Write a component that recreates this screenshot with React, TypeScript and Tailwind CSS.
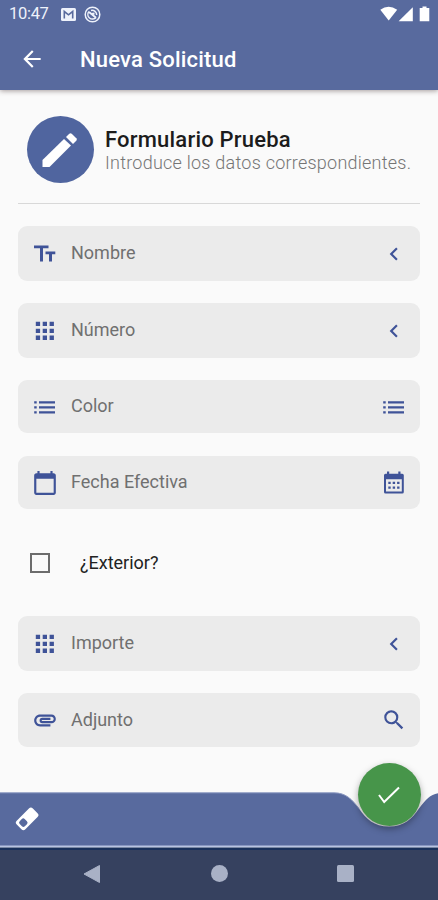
import type {ReactNode} from "react";
import {
    MdArrowBack,
    MdAttachment,
    MdCalendarToday,
    MdChevronLeft,
    MdSearch,
} from "react-icons/md";

const iconTheme = "mt-px size-[26px] shrink-0 text-[#3f5398]"

function TextSizeIcon() {
    return <svg viewBox="0 0 26 26" className={iconTheme} fill="currentColor">
        <path d="M2 4.500H16.500V7.300H11V20.500H8V7.300H2ZM13.500 10.500H23.300V13.300H20V20.500H17V13.300H13.500Z" />
    </svg>
}

function GridIcon() {
    return <svg viewBox="0 0 26 26" className={iconTheme} fill="currentColor">
        <path d="M3.800 3.800h4.300v4.300h-4.300ZM10.700 3.800h4.300v4.300h-4.300ZM17.600 3.800h4.300v4.300h-4.300ZM3.800 10.700h4.300v4.300h-4.300ZM10.700 10.700h4.300v4.300h-4.300ZM17.600 10.700h4.300v4.300h-4.300ZM3.800 17.600h4.300v4.300h-4.300ZM10.700 17.600h4.300v4.300h-4.300ZM17.600 17.600h4.300v4.300h-4.300Z" />
    </svg>
}

function ListIcon() {
    return <svg viewBox="0 0 26 26" className={iconTheme} fill="currentColor">
        <path d="M2.200 7.300H4.700V9.600H2.200ZM2.200 12.300H4.700V14.600H2.200ZM2.200 17.300H4.700V19.600H2.200ZM7 7.300H23V9.600H7ZM7 12.300H23V14.600H7ZM7 17.300H23V19.600H7Z" />
    </svg>
}

function CalendarMonthIcon() {
    return <svg viewBox="0 0 26 26" className={iconTheme} fill="currentColor">
        <path
            fillRule="evenodd"
            d="M6 1.500H8.200V3.700H17.300V1.500H19.500V3.700H21.300Q22.800 3.700 22.800 5.200V22Q22.800 23.500 21.300 23.500H4.500Q3 23.500 3 22V5.200Q3 3.700 4.500 3.700H6ZM5 9.200V21.500H20.800V9.200Z" />
        <path d="M7.300 11.700H9.700V14H7.300ZM11.700 11.700H14.100V14H11.700ZM16.100 11.700H18.500V14H16.100ZM7.300 16.500H9.700V18.800H7.300ZM11.700 16.500H14.100V18.800H11.700ZM16.100 16.500H18.500V18.800H16.100Z" />
    </svg>
}

function PencilIcon() {
    return <svg viewBox="0 0 36 36" className="size-9" fill="#fff">
        <path d="M.500 28L22 7L29 13.500L7.500 35H.500Z" />
        <path d="M24 5L27.300 1.800Q28.500 .700 29.700 1.800L34.300 6.300Q35.400 7.500 34.300 8.700L31 12Z" />
    </svg>
}

function MailIcon() {
    return <svg viewBox="0 0 15 13" className="h-[13px] w-[15px]">
        <rect width="15" height="13" rx="1.5" fill="#eef2fb" />
        <path d="M3.300 10.500V3.500L7.500 6.800L11.700 3.500V10.500" fill="none" stroke="#586a9e" strokeWidth="1.600" />
    </svg>
}

function BlockedIcon() {
    return <svg viewBox="0 0 17 17" className="size-[17px]" fill="none" stroke="#eef2fb">
        <circle cx="8.500" cy="8.500" r="7.300" strokeWidth="1.500" />
        <path d="M5 5.500A4.500 4.500 0 1 0 12 11.500M7 4.500A4.500 4.500 0 0 1 12.700 9" strokeWidth="1.500" />
        <path d="M5 6L12 11.700M7.500 8L10.500 7.500" strokeWidth="1.800" />
    </svg>
}

function SignalIcons() {
    return <svg viewBox="0 0 50 16" className="h-4 w-[50px]" fill="#fff">
        <path d="M.300 3.800Q8.500 -2.200 17.200 3.800L8.700 14.500Z" />
        <path d="M18.600 15.200L32.800 1.300V15.200Z" />
        <path d="M42.500 .500H46.500V2H49.300V15.300H39.700V2H42.500Z" />
    </svg>
}

function EraserIcon() {
    return <svg viewBox="0 0 24 24" className="size-6">
        <g transform="rotate(-45 12 12)">
            <rect x=".8" y="5.900" width="22.800" height="12.200" rx="2.800" fill="#fff" />
            <rect x="3.300" y="8.400" width="7" height="7.200" rx="2" fill="#586a9e" />
        </g>
    </svg>
}

type FieldProps = {
    label: string
    left: ReactNode
    right: ReactNode
    className: string
}

function Field({label, left, right, className}: FieldProps) {
    return <div className={"flex items-center rounded-[9px] bg-[#ebebeb] pb-px pl-3.5 pr-[13px] " + className}>
        {left}
        <span className="ml-[13px] flex-1 text-[18px] leading-6 text-[#707070]">{label}</span>
        {right}
    </div>
}

function BottomBar() {
    return <div className="relative h-[56px] shrink-0 bg-[#fafafa]">
        <svg viewBox="0 0 438 56" className="absolute inset-0 h-[56px] w-[438px]">
            <path
                d="M0 .8H334C346 .8 352 7.500 359 16.500C366 27 374 34.500 389 34.500C404 34.500 412 27 419 16.500C426 7.500 430 2.500 438 1.200V54H0Z"
                fill="#586a9e" />
            <path d="M0 .8H334C346 .8 352 7.500 359 16.500" fill="none" stroke="#8d9ac2" strokeWidth="1" />
            <rect y="53.500" width="438" height="2" fill="#b8c4e2" />
            <rect y="55.500" width="438" height=".500" fill="#18305a" />
        </svg>
        <button type="button" className="absolute left-[15px] top-[15px]">
            <EraserIcon />
        </button>
        <button
            type="button"
            className="absolute left-[358px] top-[-29px] flex size-[63px] items-center justify-center rounded-full bg-[#47954a] pr-px pt-px shadow-[0_3px_7px_rgba(0,0,0,0.35)]">
            <svg viewBox="0 0 24 24" className="size-6" fill="none" stroke="#fff" strokeWidth="2">
                <path d="M2 12L7.200 19L22 4.500" />
            </svg>
        </button>
    </div>
}

function NavigationBar() {
    return <div className="flex h-[52px] shrink-0 items-center border-t-2 border-[#18305a] bg-[#36415f] pb-[3px] pl-[83px]">
        <svg viewBox="0 0 18 20" className="h-5 w-[18px]">
            <path d="M1 10L16.500 1.500V18.500Z" fill="#a9b1c6" stroke="#a9b1c6" strokeLinejoin="round" />
        </svg>
        <div className="ml-[110px] size-[17px] rounded-full bg-[#a9b1c6]" />
        <div className="ml-[109px] size-[17px] rounded-[1.5px] bg-[#a9b1c6]" />
    </div>
}

export default function App() {
    return <div className="flex h-[900px] w-[438px] flex-col overflow-hidden bg-[#fafafa] font-['Roboto',sans-serif]">
        <header className="z-10 h-[90px] shrink-0 bg-[#586a9e] text-white shadow-[0_1px_5px_rgba(60,40,40,0.45)]">
            <div className="flex h-[28px] items-center pl-[9px] pr-2">
                <span className="w-[52px] pt-px text-[16.5px] tracking-[-0.3px] text-[#eef2fb]">10:47</span>
                <MailIcon />
                <span className="ml-2"><BlockedIcon /></span>
                <span className="ml-auto"><SignalIcons /></span>
            </div>
            <div className="flex h-[62px] items-center pl-[19px]">
                <MdArrowBack className="size-[26px]" />
                <h1 className="ml-[35px] pt-px text-[22px] font-medium leading-7 tracking-[0.2px]">Nueva Solicitud</h1>
            </div>
        </header>
        <main className="flex min-h-0 flex-1 flex-col px-[18px] pt-[26px]">
            <div className="flex h-[88px] shrink-0 border-b border-[#d8d8d8] pl-2">
                <div className="ml-[0.5px] flex size-[67px] items-center justify-center rounded-full bg-[#50659f] pr-px">
                    <PencilIcon />
                </div>
                <div className="ml-[11.5px] whitespace-nowrap pt-[11px]">
                    <h2 className="text-[22px] font-medium leading-[25px] tracking-[0.2px] text-[#1c1c1c]">Formulario Prueba</h2>
                    <p className="text-[18px] font-light leading-[21px] tracking-[0.24px] text-[#757575]">Introduce los datos correspondientes.</p>
                </div>
            </div>
            <Field
                label="Nombre"
                className="mt-[22px] h-[55px]"
                left={<TextSizeIcon />}
                right={<MdChevronLeft className={iconTheme} />} />
            <Field
                label="Número"
                className="mt-[22px] h-[55px]"
                left={<GridIcon />}
                right={<MdChevronLeft className={iconTheme} />} />
            <Field
                label="Color"
                className="mt-[22px] h-[53px]"
                left={<ListIcon />}
                right={<ListIcon />} />
            <Field
                label="Fecha Efectiva"
                className="mt-[23px] h-[53px]"
                left={<MdCalendarToday className={iconTheme} />}
                right={<CalendarMonthIcon />} />
            <label className="flex h-[107px] items-center pl-3">
                <span className="size-5 border-2 border-[#6c6c6c]" />
                <span className="ml-[30px] text-[18px] leading-6 text-[#222]">¿Exterior?</span>
            </label>
            <Field
                label="Importe"
                className="h-[55px]"
                left={<GridIcon />}
                right={<MdChevronLeft className={iconTheme} />} />
            <Field
                label="Adjunto"
                className="mt-[22px] h-[54px]"
                left={<MdAttachment className={iconTheme} />}
                right={<MdSearch className={iconTheme} />} />
        </main>
        <BottomBar />
        <NavigationBar />
    </div>
}
